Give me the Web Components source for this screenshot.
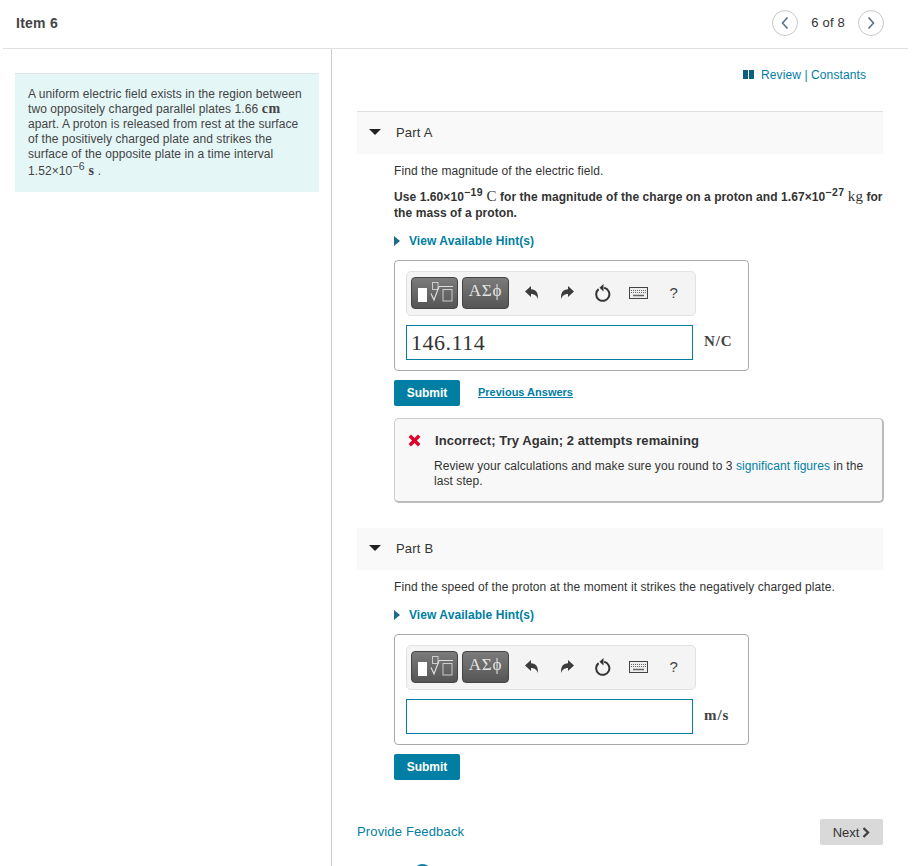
<!DOCTYPE html>
<html>
<head>
<meta charset="utf-8">
<title>Item 6</title>
<style>
html, body { margin: 0; padding: 0; background: #fff; height: 866px; overflow: hidden; }
body { font-family: "Liberation Sans", Arial, sans-serif; font-size: 12px; color: #333; }
</style>
</head>
<body>
<item-page></item-page>

<script>
const mathFont = `"Liberation Serif", "Times New Roman", serif`

// small helper so every component is written the same way
function define(name, html) {
  const template = document.createElement("template")
  template.innerHTML = html
  customElements.define(name, class extends HTMLElement {
    constructor() {
      super()
      this.shadow = this.attachShadow({mode: "open"})
      this.shadow.append(template.content.cloneNode(true))
    }
  })
}

define("item-header", /*html*/`
<style>
:host { display: flex; align-items: center; height: 49px; box-sizing: border-box; margin-left: 3px; width: 905px;
  border-bottom: 1px solid #e0e0e0; padding: 0 24px 3px 13px; }
h1 { margin: 0; font-size: 14px; font-weight: bold; color: #444; flex: 1; letter-spacing: .25px; }
.pager { display: flex; align-items: center; gap: 13px; font-size: 13px; color: #333; letter-spacing: .2px; }
.round { width: 26px; height: 26px; box-sizing: border-box; border: 1px solid #c8c8c8; border-radius: 50%;
  display: flex; align-items: center; justify-content: center; }
</style>
<h1>Item 6</h1>
<div class="pager">
  <span class="round"><svg width="10" height="14" viewBox="0 0 10 14"><path d="M7.500 1.500 2.500 7l5 5.500" fill="none" stroke="#5c7080" stroke-width="1.600"/></svg></span>
  <span>6 of 8</span>
  <span class="round"><svg width="10" height="14" viewBox="0 0 10 14"><path d="M2.500 1.500 7.500 7l-5 5.500" fill="none" stroke="#5c7080" stroke-width="1.600"/></svg></span>
</div>
`)

define("item-intro", /*html*/`
<style>
:host { display: block; box-sizing: border-box; width: 304px; height: 119px; margin: 24px 0 0 15px;
  background: #e5f6f7; border-top: 1px solid #dde5e8; padding: 13px 12px 0 13px;
  font-size: 12px; line-height: 15px; color: #444; letter-spacing: .08px; }
</style>
<slot></slot>
`)

define("hint-link", /*html*/`
<style>
:host { display: flex; align-items: center; gap: 9px; font-size: 12px; font-weight: bold; color: #007ea3; height: 16px; letter-spacing: .07px; }
</style>
<svg width="6" height="10" viewBox="0 0 6 10"><path d="M0 0 6 5 0 10z" fill="#1d6a86"/></svg>
<span><slot></slot></span>
`)

define("submit-button", /*html*/`
<style>
:host { display: inline-flex; align-items: center; justify-content: center; width: 66px; height: 26px;
  background: #007ea3; color: #fff; font-size: 12px; font-weight: bold; border-radius: 2px; }
</style>
<slot></slot>
`)

define("math-toolbar", /*html*/`
<style>
:host { display: flex; align-items: center; box-sizing: border-box; width: 290px; height: 45px;
  background: #f4f4f4; border: 1px solid #e2e2e2; border-radius: 5px; padding: 0 0 2px 4px; }
.tpl { box-sizing: border-box; height: 32px; border: 1px solid #444; border-radius: 4px; margin-right: 4px;
  background: linear-gradient(#7b7b7b, #555); color: #e4e4e4; display: flex; align-items: center; justify-content: center; }
.a { width: 47px; }
.b { width: 47px; font-family: ${mathFont}; font-size: 17px; letter-spacing: .8px; padding-bottom: 3px; }
.tool { width: 35.500px; display: flex; justify-content: center; align-items: center; height: 32px; color: #444; }
.q { font-size: 15px; }
</style>
<span class="tpl a"><svg width="45" height="30" viewBox="0 0 45 30">
  <rect x="6" y="10" width="9" height="14" fill="#fff"/>
  <rect x="20.500" y="4.500" width="5.500" height="7" fill="none" stroke="#ccc"/>
  <path d="M19 15.500 22 22 27 8.500H41" fill="none" stroke="#ddd" stroke-width="1.200"/>
  <rect x="31" y="11.500" width="9" height="11.500" fill="none" stroke="#ccc"/>
</svg></span>
<span class="tpl b">&Alpha;&Sigma;&#981;</span>
<span style="width:1px"></span>
<span class="tool"><svg width="14" height="14" viewBox="0 0 14 14"><path d="M0 5.500 6 0v3.300c5 .2 7.500 3.500 6.800 9.700C11.800 9.800 10 8 6 7.900v3z" fill="#3c3c3c"/></svg></span>
<span class="tool"><svg width="14" height="14" viewBox="0 0 14 14"><path d="M14 5.500 8 0v3.300C3 3.500.5 6.800 1.200 13 2.200 9.800 4 8 8 7.900v3z" fill="#3c3c3c"/></svg></span>
<span class="tool"><svg width="17" height="18" viewBox="0 0 17 18"><path d="M4.600 5.100a6.600 6.600 0 1 0 5.600-1.300" fill="none" stroke="#333" stroke-width="2"/><path d="M9.500 0 5.500 3.800 9.500 7.500z" fill="#333"/></svg></span>
<span class="tool"><svg width="19" height="12" viewBox="0 0 19 12"><rect x=".5" y=".5" width="18" height="11" fill="#eee" stroke="#444"/><path d="M2 3.500h15M2 5.500h15" stroke="#666" stroke-dasharray="1 1"/><path d="M4 8.500h11" stroke="#666" stroke-width="1.500"/></svg></span>
<span class="tool q">?</span>
`)

define("answer-box", /*html*/`
<style>
:host { display: block; box-sizing: border-box; width: 355px; height: 111px; border: 1px solid #aaa; border-radius: 4px; padding: 10px 11px; }
.row { display: flex; align-items: center; margin-top: 9px; }
.input { box-sizing: border-box; width: 287px; height: 35px; border: 1px solid #007ea3; padding: 0 0 0 4px;
  font-family: ${mathFont}; font-size: 22px; line-height: 33px; color: #333; letter-spacing: .5px; }
.unit { margin-left: 11px; padding-bottom: 3px; font-family: ${mathFont}; font-size: 15px; font-weight: bold; color: #444; letter-spacing: .9px; }
</style>
<math-toolbar></math-toolbar>
<div class="row">
  <div class="input"><slot name="value"></slot></div>
  <div class="unit"><slot name="unit"></slot></div>
</div>
`)

define("feedback-box", /*html*/`
<style>
:host { display: block; box-sizing: border-box; width: 490px; height: 85px; background: #f8f8f8; border: 1px solid #ccc;
  border-right: 2px solid #bbb; border-bottom: 2px solid #bbb; border-radius: 5px; padding: 13px 10px 0 13px; }
.top { display: flex; align-items: center; gap: 14px; font-size: 13px; font-weight: bold; color: #333; height: 16px; letter-spacing: .07px; }
.msg { margin: 11px 0 0 26px; font-size: 12px; line-height: 15px; color: #333; letter-spacing: .07px; }
</style>
<div class="top">
  <svg width="13" height="13" viewBox="0 0 13 13"><path d="M1.800 1.800 11.200 11.200M11.200 1.800 1.800 11.200" stroke="#e0002a" stroke-width="3.400"/></svg>
  <span><slot name="title"></slot></span>
</div>
<div class="msg"><slot></slot></div>
`)

define("item-part", /*html*/`
<style>
:host { display: block; width: 526px; }
.head { display: flex; align-items: center; height: 42px; box-sizing: border-box; padding-bottom: 2px; background: #f9f9f9; font-size: 13px; color: #333; letter-spacing: .2px; }
.head svg { margin: 0 15px 0 12px; }
.body { padding-left: 37px; }
</style>
<div class="head">
  <svg width="12" height="6" viewBox="0 0 12 6"><path d="M0 0h12L6 6z" fill="#222"/></svg>
  <span><slot name="title"></slot></span>
</div>
<div class="body"><slot></slot></div>
`)

define("item-page", /*html*/`
<style>
:host { display: block; position: relative; width: 912px; height: 866px; overflow: hidden; }
.cols { display: flex; height: 817px; }
.left { width: 331px; box-sizing: border-box; }
.right { width: 577px; border-left: 1px solid #c8ccd2; padding-left: 25px; box-sizing: border-box; }
.links { display: flex; align-items: center; justify-content: flex-end; gap: 7px; height: 62px; width: 509px; padding-bottom: 11px;
  box-sizing: border-box; font-size: 12px; color: #007ea3; letter-spacing: .1px; }
.a-top { border-top: 1px solid #e0e0e0; width: 526px; }
p { margin: 0; font-size: 12px; line-height: 15px; color: #333; letter-spacing: .08px; }
.strong { font-weight: bold; width: 492px; }
.m { font-family: ${mathFont}; font-size: 15px; font-weight: normal; line-height: 0; }
.mb { font-family: ${mathFont}; font-size: 14px; font-weight: bold; letter-spacing: .5px; line-height: 0; }
.sup { font-size: 10.500px; line-height: 0; vertical-align: 5px; font-weight: bold; letter-spacing: .4px; }
.sup-n { font-size: 10.500px; line-height: 0; vertical-align: 5px; letter-spacing: .4px; }
.last { display: block; margin-top: 2px; }
.link { color: #007ea3; }
.actions { display: flex; align-items: center; gap: 18px; margin-top: 9px; }
.prev { font-size: 11px; font-weight: bold; color: #007ea3; text-decoration: underline; margin-bottom: 3px; }
.foot { display: flex; align-items: center; justify-content: space-between; width: 526px; margin-top: 39px; }
.feed { color: #007ea3; font-size: 13px; letter-spacing: .15px; margin-bottom: 1px; }
.next { width: 63px; height: 26px; background: #d9d9d9; border-radius: 2px; color: #333; display: flex; align-items: center; justify-content: center; gap: 3px; font-size: 13px; }
.spinner { position: absolute; left: 413px; top: 864px; width: 19px; height: 19px; box-sizing: border-box; border: 3px solid #0f7da3; border-radius: 50%; }
</style>
<item-header></item-header>
<div class="cols">
  <div class="left">
    <item-intro>A uniform electric field exists in the region between two oppositely charged parallel plates 1.66 <span class="mb">cm</span> apart. A proton is released from rest at the surface of the positively charged plate and strikes the surface of the opposite plate in a time interval <span class="last">1.52&times;10<span class="sup-n">&minus;6</span> <span class="mb">s</span> .</span></item-intro>
  </div>
  <div class="right">
    <div class="links">
      <svg width="11" height="9" viewBox="0 0 11 9"><path d="M0 0h5v9H0zM6 0h5v9H6z" fill="#0d5f7d"/></svg>
      <span>Review | Constants</span>
    </div>
    <div class="a-top"></div>
    <item-part>
      <span slot="title">Part A</span>
      <p style="margin-top:10px">Find the magnitude of the electric field.</p>
      <p class="strong" style="margin-top:10px;line-height:16px">Use 1.60&times;10<span class="sup">&minus;19</span> <span class="m">C</span> for the magnitude of the charge on a proton and 1.67&times;10<span class="sup">&minus;27</span> <span class="m">kg</span> for the mass of a proton.</p>
      <hint-link style="margin-top:12px">View Available Hint(s)</hint-link>
      <answer-box style="margin-top:11px">
        <span slot="value">146.114</span>
        <span slot="unit">N/C</span>
      </answer-box>
      <div class="actions">
        <submit-button>Submit</submit-button>
        <span class="prev">Previous Answers</span>
      </div>
      <feedback-box style="margin-top:12px">
        <span slot="title">Incorrect; Try Again; 2 attempts remaining</span>
        Review your calculations and make sure you round to 3 <span class="link">significant figures</span> in the last step.
      </feedback-box>
    </item-part>
    <item-part style="margin-top:25px">
      <span slot="title">Part B</span>
      <p style="margin-top:10px">Find the speed of the proton at the moment it strikes the negatively charged plate.</p>
      <hint-link style="margin-top:12px">View Available Hint(s)</hint-link>
      <answer-box style="margin-top:11px">
        <span slot="value"></span>
        <span slot="unit">m/s</span>
      </answer-box>
      <div class="actions"><submit-button>Submit</submit-button></div>
    </item-part>
    <div class="foot">
      <span class="feed">Provide Feedback</span>
      <span class="next">Next <svg width="8" height="11" viewBox="0 0 8 11"><path d="M1.500 1 6 5.500 1.500 10" fill="none" stroke="#444" stroke-width="2.400"/></svg></span>
    </div>
  </div>
</div>
<div class="spinner"></div>
`)
</script>
</body>
</html>
